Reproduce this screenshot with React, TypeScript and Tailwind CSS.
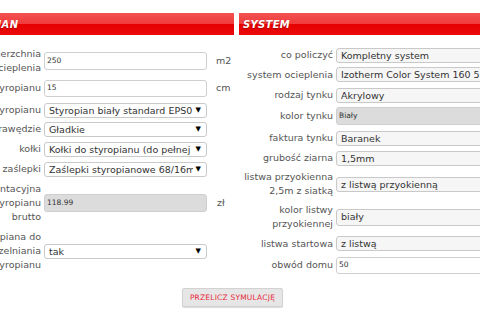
import React from "react";

const font = { fontFamily: '"DejaVu Sans", Verdana, sans-serif' };

function Label({ lines, className = "" }: { lines: string[]; className?: string }) {
  return (
    <div className={"w-[94px] shrink-0 text-right text-[9.5px] leading-[14px] text-[#555] " + className}>
      {lines.map((l, i) => (
        <div key={i} className="whitespace-nowrap">{l}</div>
      ))}
    </div>
  );
}

function Select({ value, arrow = true, w = "w-[163px]", bg = "bg-white" }: { value: string; arrow?: boolean; w?: string; bg?: string }) {
  return (
    <div className={`${w} h-[15px] ml-[3px] shrink-0 flex items-center border border-[#c9c9c9] rounded-[3px] ${bg} pl-[4px] pr-[5px] overflow-hidden`}>
      <span className="flex-1 min-w-0 whitespace-nowrap overflow-hidden text-[9.5px] leading-[13px] text-[#333]">{value}</span>
      {arrow && <span className="shrink-0 text-[7px] text-black ml-[3px]">▼</span>}
    </div>
  );
}

function TextInput({ value, w = "w-[163px]", h = "h-[18px]", gray = false }: { value: string; w?: string; h?: string; gray?: boolean }) {
  return (
    <div className={`${w} ${h} ml-[3px] shrink-0 flex items-center border border-[#cfcfcf] rounded-[3px] ${gray ? "bg-[#dcdcdc]" : "bg-white"} pl-[2px] overflow-hidden`}>
      <span className="text-[7.5px] text-[#333] whitespace-nowrap">{value}</span>
    </div>
  );
}

function Header({ title }: { title: string }) {
  return (
    <div className="h-[22px] flex items-center pl-[4px] bg-[linear-gradient(to_bottom,#f25252_0%,#f03c3c_48%,#e60000_52%,#ea0a0a_100%)]">
      <span className="text-white font-bold italic text-[10px] tracking-[0.3px] [text-shadow:0_1px_1px_rgba(120,0,0,0.6)]">{title}</span>
    </div>
  );
}

export default function App() {
  return (
    <div className="w-[480px] h-[320px] overflow-hidden bg-white" style={font}>
      <div className="flex gap-[5px] ml-[-53px] pt-[13px]">
        {/* Left panel */}
        <div className="w-[287px] shrink-0">
          <Header title="STYROPIAN" />
          <div className="mt-[12px] h-[28px] flex items-center">
            <Label lines={["Powierzchnia", "ocieplenia"]} />
            <TextInput value="250" />
            <span className="ml-[9px] text-[9.5px] text-[#555]">m2</span>
          </div>
          <div className="h-[26px] flex items-center">
            <Label lines={["grubość styropianu"]} />
            <TextInput value="15" h="h-[17px]" />
            <span className="ml-[9px] text-[9.5px] text-[#555]">cm</span>
          </div>
          <div className="h-[18px] flex items-center">
            <Label lines={["rodzaj styropianu"]} />
            <Select value="Styropian biały standard EPS0" />
          </div>
          <div className="h-[20px] flex items-center">
            <Label lines={["krawędzie"]} />
            <Select value="Gładkie" />
          </div>
          <div className="h-[20px] flex items-center">
            <Label lines={["kołki"]} />
            <Select value="Kołki do styropianu (do pełnej" />
          </div>
          <div className="h-[20px] flex items-center">
            <Label lines={["zaślepki"]} />
            <Select value="Zaślepki styropianowe 68/16mm" />
          </div>
          <div className="h-[48px] flex items-center">
            <Label lines={["cena orientacyjna", "styropianu", "brutto"]} />
            <TextInput value="118.99" gray />
            <span className="ml-[10px] text-[9.5px] text-[#555]">zł</span>
          </div>
          <div className="h-[48px] flex items-center">
            <Label lines={["Klej-piana do", "uszczelniania", "styropianu"]} />
            <Select value="tak" />
          </div>
        </div>
        {/* Right panel */}
        <div className="w-[287px] shrink-0">
          <Header title="SYSTEM" />
          <div className="mt-[12px] h-[16px] flex items-center">
            <Label lines={["co policzyć"]} />
            <Select value="Kompletny system" arrow={false} w="w-[190px]" bg="bg-[#f6f6f6]" />
          </div>
          <div className="h-[23px] flex items-center">
            <Label lines={["system ocieplenia"]} />
            <Select value="Izotherm Color System 160 5S" arrow={false} w="w-[190px]" bg="bg-[#f6f6f6]" />
          </div>
          <div className="h-[18px] flex items-center">
            <Label lines={["rodzaj tynku"]} />
            <Select value="Akrylowy" arrow={false} w="w-[190px]" bg="bg-[#f6f6f6]" />
          </div>
          <div className="h-[24px] flex items-center">
            <Label lines={["kolor tynku"]} />
            <TextInput value="Biały" gray w="w-[190px]" />
          </div>
          <div className="h-[20px] flex items-center">
            <Label lines={["faktura tynku"]} />
            <Select value="Baranek" arrow={false} w="w-[190px]" bg="bg-[#f6f6f6]" />
          </div>
          <div className="h-[20px] flex items-center">
            <Label lines={["grubość ziarna"]} />
            <Select value="1,5mm" arrow={false} w="w-[190px]" bg="bg-[#f6f6f6]" />
          </div>
          <div className="h-[32px] flex items-center">
            <Label lines={["listwa przyokienna", "2,5m z siatką"]} />
            <Select value="z listwą przyokienną" arrow={false} w="w-[190px]" bg="bg-[#f6f6f6]" />
          </div>
          <div className="h-[34px] flex items-center">
            <Label lines={["kolor listwy", "przyokiennej"]} />
            <div className="w-[190px] h-[17px] ml-[3px] flex items-center border border-[#c9c9c9] rounded-[3px] bg-[#f6f6f6] pl-[4px]">
              <span className="text-[9.5px] text-[#333]">biały</span>
            </div>
          </div>
          <div className="h-[19px] flex items-center">
            <Label lines={["listwa startowa"]} />
            <Select value="z listwą" arrow={false} w="w-[190px]" bg="bg-[#f6f6f6]" />
          </div>
          <div className="h-[24px] flex items-center">
            <Label lines={["obwód domu"]} />
            <TextInput value="50" w="w-[190px]" h="h-[17px]" />
          </div>
        </div>
      </div>
      <div className="flex justify-start pl-[182px] mt-[11px]">
        <div className="w-[101px] h-[19px] flex items-center justify-center bg-[#e6e6e6] border border-[#d2d2d2] rounded-[2px] shadow-[0_1px_1px_rgba(0,0,0,0.15)]">
          <span className="text-[7.5px] text-[#e8283a] tracking-[0.2px]">PRZELICZ SYMULACJĘ</span>
        </div>
      </div>
    </div>
  );
}
